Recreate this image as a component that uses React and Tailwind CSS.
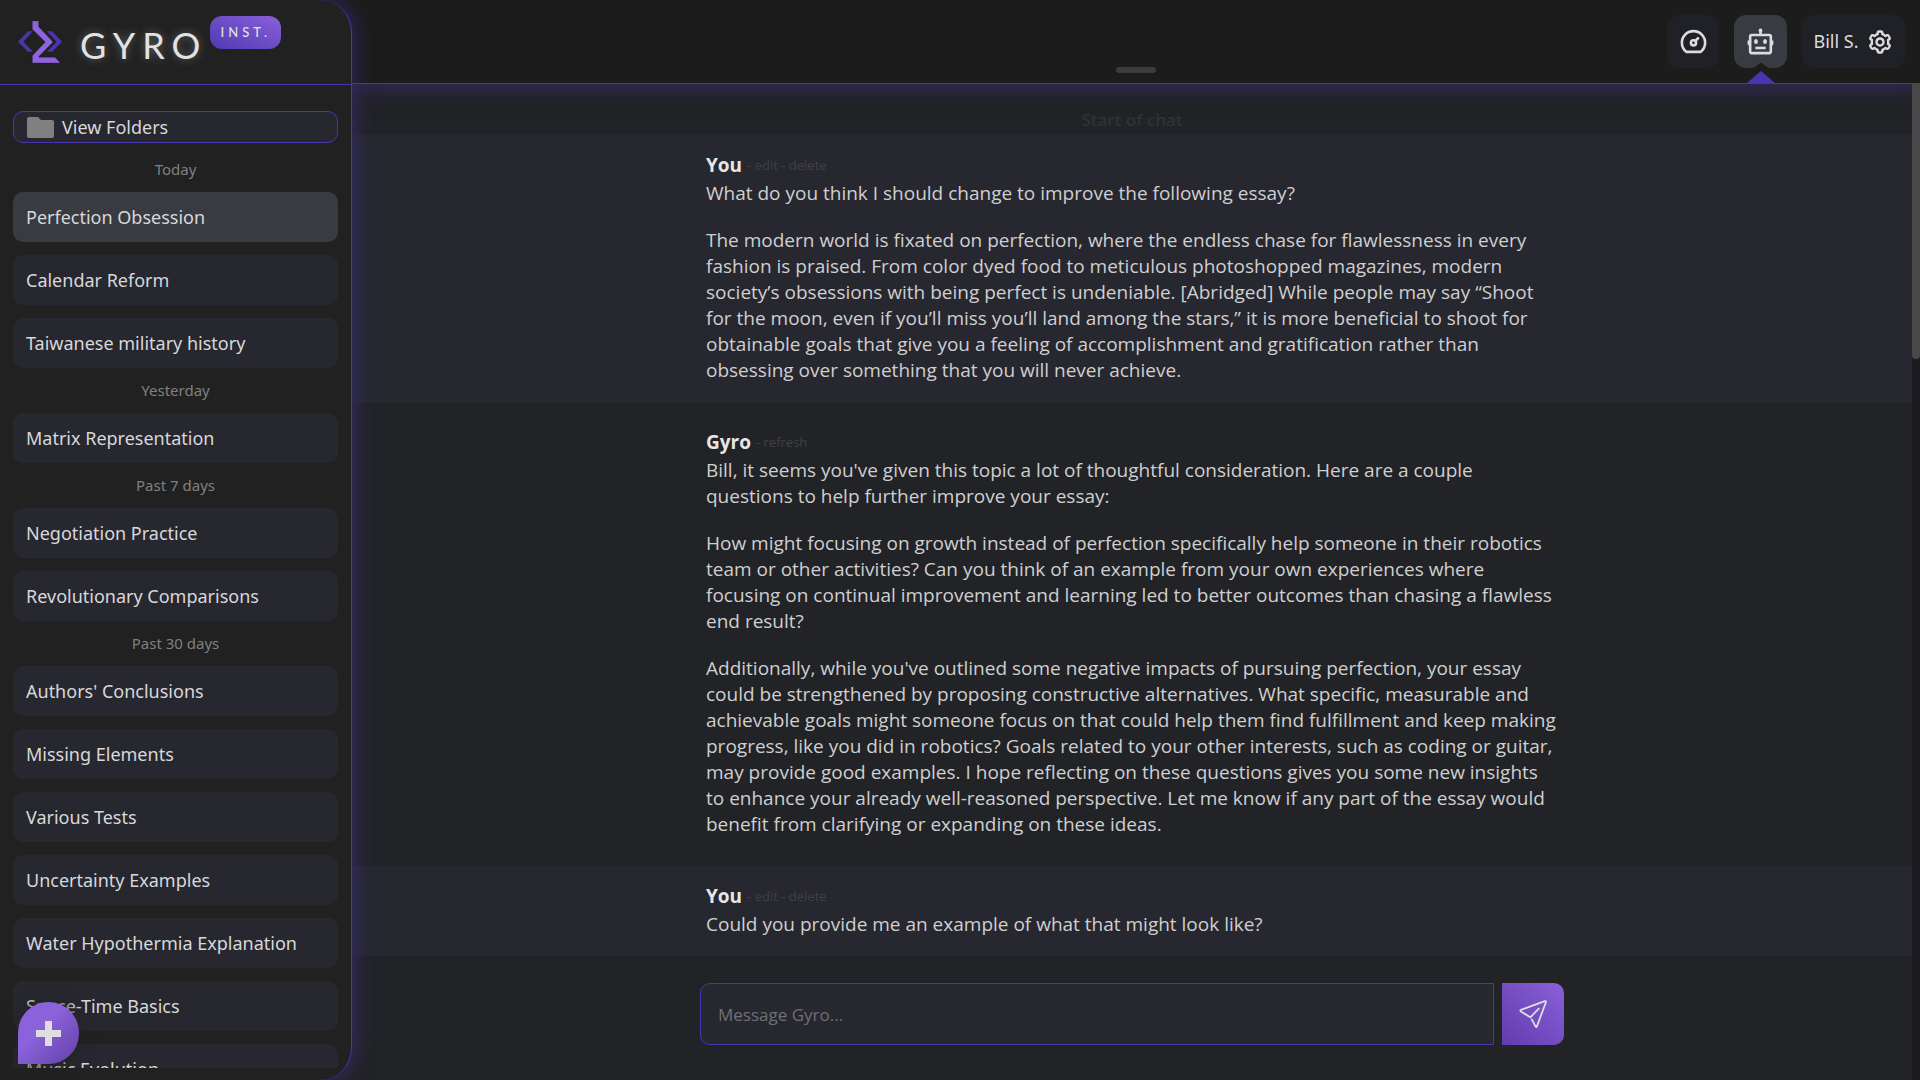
import { BiBot, BiCog } from "react-icons/bi";
import { TbDashboard } from "react-icons/tb";

const history = [
  {
    label: "Today",
    chats: ["Perfection Obsession", "Calendar Reform", "Taiwanese military history"],
  },
  { label: "Yesterday", chats: ["Matrix Representation"] },
  {
    label: "Past 7 days",
    chats: ["Negotiation Practice", "Revolutionary Comparisons"],
  },
  {
    label: "Past 30 days",
    chats: [
      "Authors' Conclusions",
      "Missing Elements",
      "Various Tests",
      "Uncertainty Examples",
      "Water Hypothermia Explanation",
      "Space-Time Basics",
      "Music Evolution",
    ],
  },
];

const messages = [
  {
    author: "You",
    paragraphs: [
      "What do you think I should change to improve the following essay?",
      `The modern world is fixated on perfection, where the endless chase for flawlessness in every
fashion is praised. From color dyed food to meticulous photoshopped magazines, modern
society’s obsessions with being perfect is undeniable. [Abridged] While people may say “Shoot
for the moon, even if you’ll miss you’ll land among the stars,” it is more beneficial to shoot for
obtainable goals that give you a feeling of accomplishment and gratification rather than
obsessing over something that you will never achieve.`,
    ],
  },
  {
    author: "Gyro",
    paragraphs: [
      `Bill, it seems you've given this topic a lot of thoughtful consideration. Here are a couple
questions to help further improve your essay:`,
      `How might focusing on growth instead of perfection specifically help someone in their robotics
team or other activities? Can you think of an example from your own experiences where
focusing on continual improvement and learning led to better outcomes than chasing a flawless
end result?`,
      `Additionally, while you've outlined some negative impacts of pursuing perfection, your essay
could be strengthened by proposing constructive alternatives. What specific, measurable and
achievable goals might someone focus on that could help them find fulfillment and keep making
progress, like you did in robotics? Goals related to your other interests, such as coding or guitar,
may provide good examples. I hope reflecting on these questions gives you some new insights
to enhance your already well-reasoned perspective. Let me know if any part of the essay would
benefit from clarifying or expanding on these ideas.`,
    ],
  },
  {
    author: "You",
    paragraphs: ["Could you provide me an example of what that might look like?"],
  },
];

const Logo = () => (
  <svg viewBox="24 33 132 126" className="h-[42px] w-11" aria-hidden="true">
    <path
      fill="#4a35b0"
      d="M24 95 54 64H69L40 95 69 125H54ZM111 64H126L156 95 126 125H111L140 95Z"
    />
    <path
      fill="#8f63dd"
      stroke="#212121"
      strokeWidth="1"
      d="M67 33H86V50L129 96 87 139V142H135L151 159H67V137L106 96 67 58Z"
    />
  </svg>
);

const SendIcon = () => (
  <svg
    viewBox="0 0 28 28"
    className="size-7"
    fill="none"
    stroke="currentColor"
    strokeWidth="1.8"
    strokeLinecap="round"
    strokeLinejoin="round"
    aria-hidden="true"
  >
    <path d="M12.8 19.4 16.6 26.6Q17.4 27.8 17.9 26.4L26.9 2.2Q27.2 .8 25.8 1.1L2 9.8Q.6 10.5 1.8 11.4L11.3 17.3 19.8 8.6" />
  </svg>
);

const Sidebar = () => (
  <div className="relative z-10 w-[352px] shrink-0 bg-linear-to-b from-[#1c1c1c] to-[#222327]">
    <aside className="flex h-full flex-col rounded-r-[32px] border-r border-[#4a35b0] bg-[#212121] pb-3 shadow-[0_0_22px_#4a35b088]">
      <div className="flex h-[85px] shrink-0 items-start border-b border-[#4a35b0] pl-[18px]">
        <div className="mt-[21px]">
          <Logo />
        </div>
        <p className="mt-[21px] ml-[18px] font-[Lato,sans-serif] text-[36px] leading-[48px] tracking-[7px] text-[#e2e2e2] [text-shadow:0_0_10px_#ffffff55]">
          GYRO
        </p>
        <span className="mt-4 ml-[3px] flex h-[33px] w-[71px] items-center justify-center rounded-[12px] bg-linear-to-tr from-[#4f39b3] to-[#8a60d8] font-[Lato,sans-serif] text-[13px] font-medium tracking-[4px] text-[#e2e2e2]">
          INST.
        </span>
      </div>

      <nav className="flex min-h-0 flex-1 flex-col gap-[13px] overflow-x-hidden overflow-y-auto px-[13px] pt-[26px] [scrollbar-width:none]">
        <button className="mb-1 flex h-8 shrink-0 items-center gap-2 rounded-[10px] border border-[#4a35b0] bg-[#272730] px-[13px] text-left text-[18px] text-[#d8d8d8]">
          <svg viewBox="0 0 27 21" className="h-[21px] w-[27px]" aria-hidden="true">
            <path
              fill="#808080"
              d="M2 0H11L14 3H25a2 2 0 0 1 2 2V19a2 2 0 0 1-2 2H2a2 2 0 0 1-2-2V2a2 2 0 0 1 2-2Z"
            />
          </svg>
          View Folders
        </button>
        {history.map((group) => (
          <section key={group.label} className="flex shrink-0 flex-col gap-[13px]">
            <h2 className="text-center text-[15px] leading-[19px] text-[#808080]">
              {group.label}
            </h2>
            {group.chats.map((chat) => (
              <button
                key={chat}
                className={`h-[50px] shrink-0 rounded-[10px] px-[13px] text-left text-[18px] text-[#d8d8d8] ${
                  chat === "Perfection Obsession" ? "bg-[#393b42]" : "bg-[#272730]"
                }`}
              >
                {chat}
              </button>
            ))}
          </section>
        ))}
      </nav>
    </aside>

    <button
      aria-label="New chat"
      className="absolute bottom-4 left-[18px] flex h-[62px] w-[61px] items-center justify-center rounded-full rounded-bl-none bg-linear-to-br from-[#8b62da] from-40% to-[#6240a8] shadow-[0_0_16px_#212121]"
    >
      <svg viewBox="0 0 25 25" className="size-[25px]" aria-hidden="true">
        <path fill="#dedede" d="M9 0H16V9H25V16H16V25H9V16H0V9H9Z" />
      </svg>
    </button>
  </div>
);

const Header = () => (
  <header className="relative z-[5] flex h-[84px] shrink-0 items-start justify-end gap-[15px] border-b border-[#4a35b0] bg-[#1c1c1c] pt-[15px] pr-[15px] text-[#dcdcdc] shadow-[0_0_22px_#4a35b088]">
    <div className="absolute bottom-[10px] left-1/2 h-[6px] w-10 -translate-x-1/2 rounded-full bg-[#3c3c3c]" />
    <button
      aria-label="Dashboard"
      className="flex h-[53px] w-[52px] items-center justify-center rounded-[12px] bg-[#202126]"
    >
      <TbDashboard className="size-[31px]" />
    </button>
    <button
      aria-label="Chat"
      className="relative flex size-[53px] items-center justify-center rounded-[12px] bg-[#393b42]"
    >
      <BiBot className="size-[31px]" />
      <svg
        viewBox="0 0 28 21"
        className="absolute top-[47px] left-1/2 h-[21px] w-7 -translate-x-1/2"
        aria-hidden="true"
      >
        <path fill="#1c1c1c" d="M5.500 6Q8 5.500 12.500 1.500 14 .2 15.500 1.500 20 5.500 22.500 6V7H5.500Z" />
        <path fill="#4a35b0" d="M14 9 28 21H0Z" />
      </svg>
    </button>
    <button className="flex h-[53px] w-[103px] items-center justify-center gap-[7px] rounded-[12px] bg-[#202126] text-[18px] whitespace-nowrap">
      Bill S.
      <BiCog className="size-7 shrink-0" />
    </button>
  </header>
);

const Message = ({ author, paragraphs }) => {
  const mine = author === "You";
  const action = "cursor-pointer text-[#404048]";
  return (
    <article
      className={`flex justify-center ${mine ? "bg-[#272730] pt-4 pb-5" : "pt-[25px] pb-[29px]"}`}
    >
      <div className="w-full max-w-[852px]">
        <div className="flex items-center gap-[5px] text-[13px] leading-[29px] text-[#404048]">
          <h3 className="text-[19px] font-bold text-[#e6e6e6]">{author}</h3>
          {mine ? (
            <span>
              - <button className={action}>edit</button> -{" "}
              <button className={action}>delete</button>
            </span>
          ) : (
            <span>
              - <button className={action}>refresh</button>
            </span>
          )}
        </div>
        <div className="flex flex-col gap-[21px] text-[19px] leading-[26px] whitespace-pre-line text-[#cfcfcf]">
          {paragraphs.map((p) => (
            <p key={p}>{p}</p>
          ))}
        </div>
      </div>
    </article>
  );
};

const Composer = () => (
  <form className="mx-auto mt-[27px] mb-[35px] flex w-full max-w-[864px] gap-2">
    <input
      type="text"
      aria-label="Message Gyro"
      placeholder="Message Gyro..."
      className="h-[62px] min-w-0 flex-1 rounded-l-[10px] border border-[#4a35b0] bg-[#272730] px-[17px] text-[17px] text-[#cfcfcf] outline-none placeholder:text-[#707072]"
    />
    <button
      type="button"
      aria-label="Send"
      className="flex size-[62px] items-center justify-center rounded-r-[10px] bg-linear-to-tr from-[#623cae] to-[#8a60d8] text-[#dedede]"
    >
      <SendIcon />
    </button>
  </form>
);

export default function App() {
  return (
    <div className="flex h-screen overflow-hidden bg-[#222327] font-['Noto_Sans',sans-serif]">
      <Sidebar />
      <div className="flex min-w-0 flex-1 flex-col">
        <Header />
        <div className="flex min-h-0 flex-1">
          <main className="flex min-w-0 flex-1 flex-col font-['Open_Sans',sans-serif]">
            <div className="min-h-0 flex-1 overflow-hidden">
              <p className="pt-[22px] pb-[2px] text-center text-[17px] leading-[27px] font-semibold text-[#303137]">
                Start of chat
              </p>
              {messages.map((m, i) => (
                <Message key={i} {...m} />
              ))}
            </div>
            <Composer />
          </main>
          <div className="relative z-[6] w-2 bg-[#1b1b20]">
            <div className="h-[275px] rounded-b-full bg-[#48484b]" />
          </div>
        </div>
      </div>
    </div>
  );
}
